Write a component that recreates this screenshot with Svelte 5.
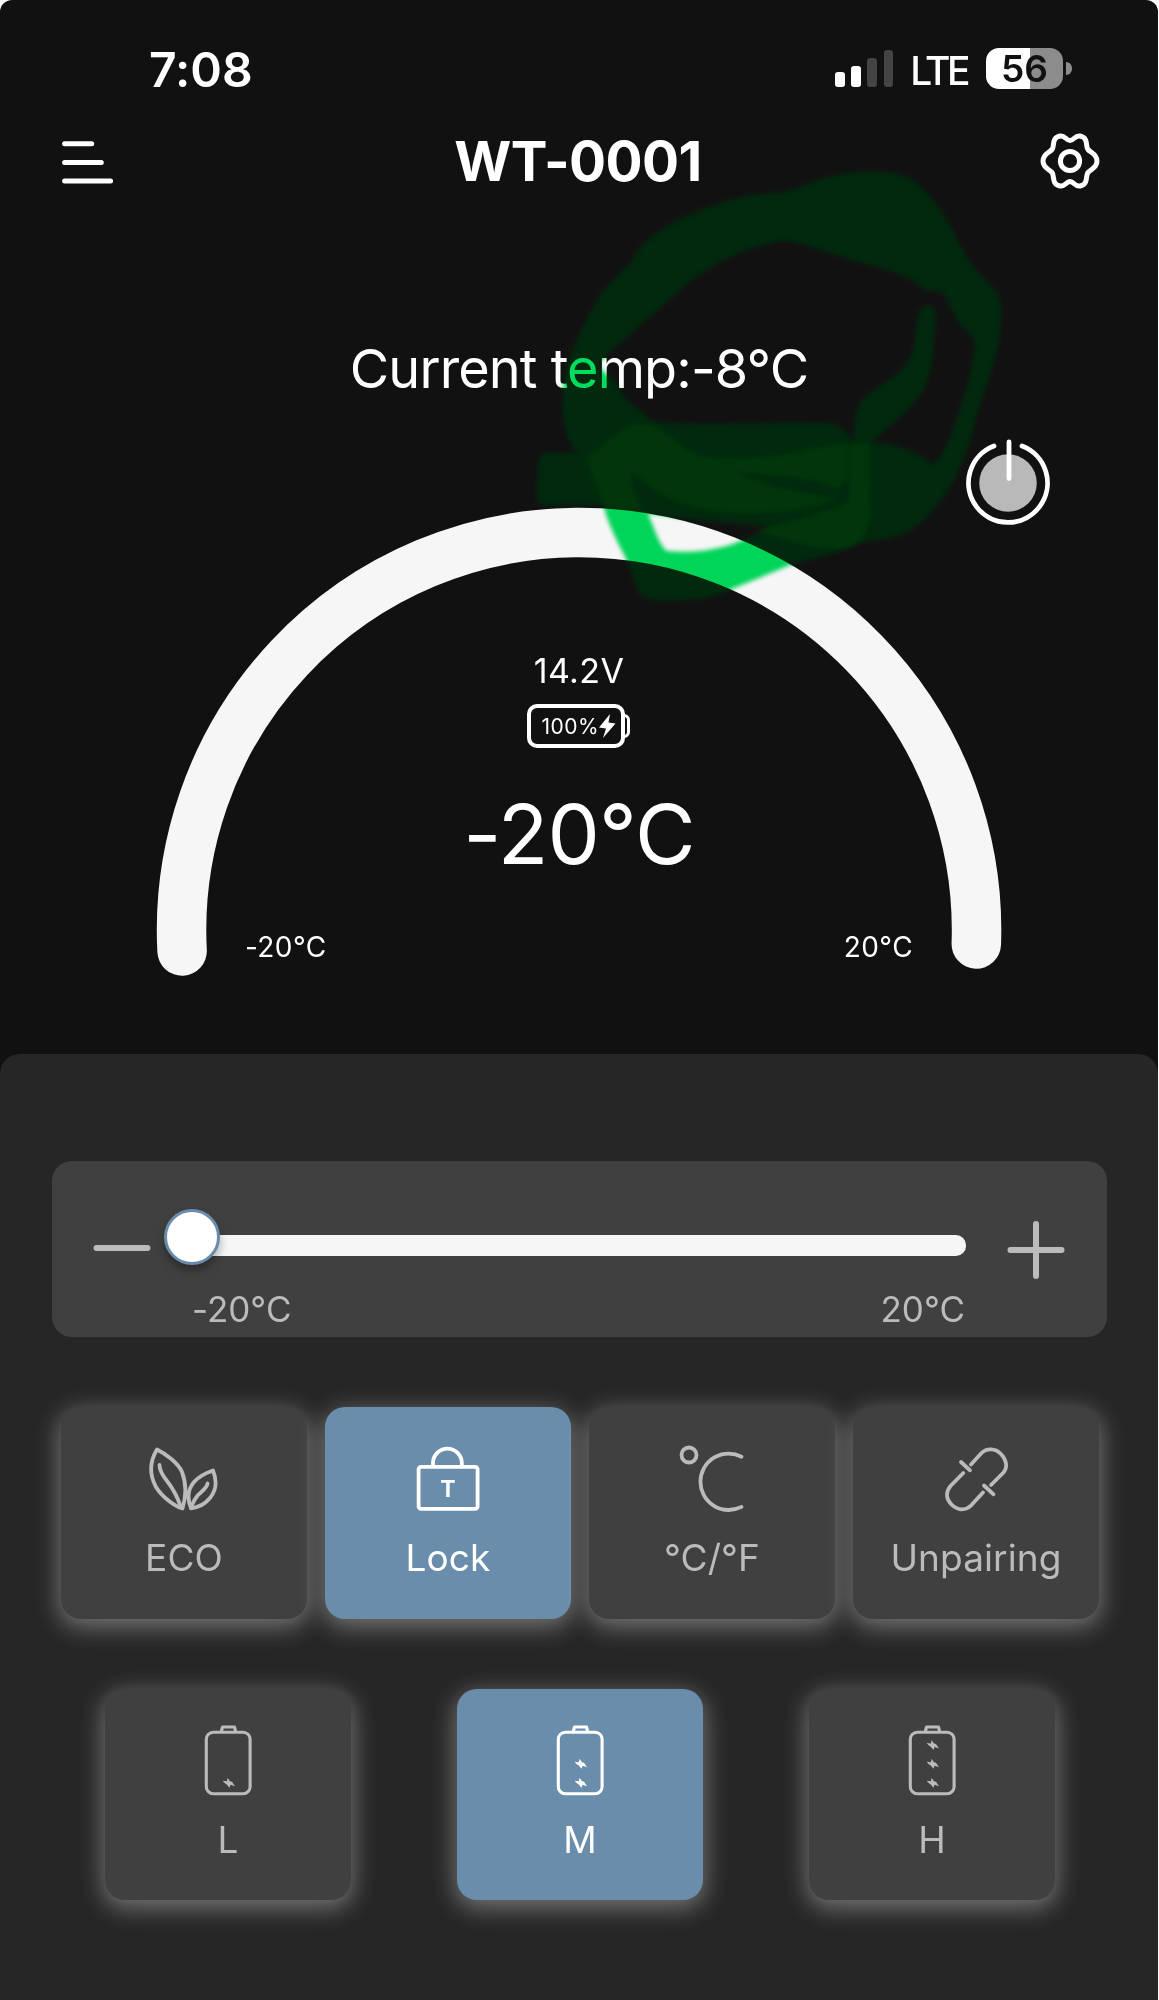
<script>
  let target = $state(-20);
  let locked = $state(true);
  let level = $state("M");

  const current = -8;
  const min = -20;
  const max = 20;
  const signal = [15, 21, 29, 37];

  const levels = [
    { name: "L", bolts: [57.7] },
    { name: "M", bolts: [38.7, 57.7] },
    { name: "H", bolts: [20, 38.7, 57.7] },
  ];

  // outline of the highlighter loop, drawn once per blend layer
  const loop =
    "M125 700C125 620 170 520 230 410C260 365 290 340 320 310C340 270 360 250 390 225C480 160 600 115 700 103C800 100 830 70 880 55C960 32 1050 30 1110 45C1180 75 1240 170 1280 260C1310 325 1350 355 1385 400C1405 440 1400 500 1380 590C1360 660 1335 730 1310 830C1285 920 1245 1000 1190 1060C1140 1125 1080 1135 1000 1145C920 1180 850 1195 790 1213L620 1285C560 1320 470 1325 400 1320C345 1320 335 1280 325 1235L305 1190C280 1140 255 1090 242 1035H65C45 1035 48 1000 52 960C55 900 50 880 80 878H165C130 840 122 770 125 700ZM228 610C330 510 400 450 480 375C560 310 650 265 740 245C800 235 850 265 900 280C990 310 1080 330 1130 355C1160 370 1170 400 1200 390C1230 385 1245 430 1270 480C1290 515 1325 520 1320 560C1315 630 1290 710 1270 770C1245 850 1220 905 1195 912C1150 870 1080 850 1018 848C1080 790 1150 740 1180 670C1205 610 1200 530 1207 460C1200 425 1165 430 1155 470C1145 520 1150 570 1125 610C1090 665 1020 680 985 735C970 770 970 810 968 850C950 810 920 790 890 790C700 785 530 800 385 785C340 740 290 710 285 680C265 650 240 640 228 610ZM370 1060C390 1100 400 1150 425 1172C480 1180 570 1175 640 1143L705 1112L720 1100C620 1090 500 1080 370 1060Z";

  let progress = $derived(((target - min) / (max - min)) * 100);

  /** @param {number} amount */
  function step(amount) {
    target = Math.min(max, Math.max(min, target + amount));
  }
</script>

<main class="phone">
  <div class="status-bar">
    <span class="time">7:08</span>
    <div class="status-icons">
      <div class="signal">
        {#each signal as height, i}
          <i class:off={i > 1} style:height="{height}px"></i>
        {/each}
      </div>
      <span class="network">LTE</span>
      <div class="phone-battery"><span>56</span></div>
    </div>
  </div>

  <header>
    <button class="plain" aria-label="Menu">
      <svg width="52" height="48" viewBox="0 -4 52 48">
        <path d="M2.6 2.8H29.7M2.6 21.4H39.3M2.6 40H48.6" />
      </svg>
    </button>
    <h1>WT-0001</h1>
    <button class="plain" aria-label="Settings">
      <svg width="60" height="56" viewBox="-30 -28 60 56">
        <path
          d="M-10 -25C-5 -26 -4 -20.5 0 -20.5S5 -26 10 -25C19 -23 15 -15 18 -11.5S27 -7 27 0S21 8 18 11.5S19 23 10 25C5 26 4 20.5 0 20.5S-5 26 -10 25C-19 23 -15 15 -18 11.5S-27 7 -27 0S-21 -8 -18 -11.5S-19 -23 -10 -25Z"
        />
        <circle r="9.6" />
      </svg>
    </button>
  </header>

  <p class="current">Current temp:{current}°C</p>

  <section class="gauge">
    <svg class="arc" width="1158" height="554" viewBox="0 500 1158 554">
      <path d="M182.1 951A397.5 397.5 0 1 1 976.3 944" />
    </svg>
    <div class="readout">
      <span class="voltage">14.2V</span>
      <div class="charge">
        <span>100%</span>
        <svg width="17" height="24" viewBox="0 0 17 24">
          <path d="M11 0L0 13.5L7 14.5L4 24L16.5 9.5L9.5 8.5Z" />
        </svg>
      </div>
      <strong>{target}°C</strong>
      <div class="range">
        <span>{min}°C</span>
        <span>{max}°C</span>
      </div>
    </div>
  </section>

  <button class="power plain" aria-label="Power">
    <svg width="86" height="90" viewBox="-43 -45 86 90">
      <circle r="28.8" />
      <path d="M-14 -37A39.5 39.5 0 1 0 14 -37M1 -41V-4.5" />
    </svg>
  </button>

  <!-- tint colours what is bright, glow lifts the dark background -->
  <svg class="marker tint" viewBox="0 0 1568 1380" preserveAspectRatio="none">
    <path fill-rule="evenodd" d={loop} />
  </svg>
  <svg class="marker glow" viewBox="0 0 1568 1380" preserveAspectRatio="none">
    <path fill-rule="evenodd" d={loop} />
    <path
      class="overlap"
      d="M190 890C230 870 270 820 310 800C350 785 390 790 430 825C500 885 600 935 700 965C780 990 850 1000 920 1015C860 1050 760 1060 650 1060C480 1055 400 1010 320 930C325 980 340 1010 355 1050L245 1040Q215 960 190 890Z"
    />
    <path
      class="overlap"
      d="M520 890C650 900 780 890 850 865Q910 850 955 850L950 950Q935 985 915 985C850 950 730 950 610 935Z"
    />
    <path
      class="overlap"
      d="M960 850H1015L1018 1060C1010 1130 980 1165 930 1168C850 1165 760 1140 690 1112C800 1080 880 1060 955 1025Z"
    />
  </svg>

  <section class="panel">
    <div class="slider-card">
      <button class="plain" aria-label="Decrease" onclick={() => step(-1)}>
        <svg width="58" height="60" viewBox="0 0 58 60">
          <path d="M3.5 28H54.5" />
        </svg>
      </button>
      <div class="slider">
        <div class="track">
          <div class="knob" style:left="{progress}%"></div>
        </div>
        <div class="limits">
          <span>{min}°C</span>
          <span>{max}°C</span>
        </div>
      </div>
      <button class="plain" aria-label="Increase" onclick={() => step(1)}>
        <svg width="58" height="60" viewBox="0 0 58 60">
          <path d="M3.5 30H54.5M29 4V56" />
        </svg>
      </button>
    </div>

    <div class="tiles">
      <button class="tile">
        <svg width="80" height="76" viewBox="0 0 80 76">
          <path
            d="M13 6.5C22 11 34 20 38 29C43 42 42 54 38.5 65.5C31 63.5 18 54 12 44C5 31 6 18 13 6.5ZM69 27.5C74 40 71 49 66 55C61 61 54 64.5 47 65.3C42.5 54 44 46 50 39C55 33 62 30 69 27.5Z"
          />
          <path
            d="M15.5 22C15.5 28 19 33 23 38S33 53 36.5 63M63.5 40.5C63 45 58 48 54 52Q50 57 48 62"
          />
        </svg>
        ECO
      </button>
      <button
        class="tile"
        class:active={locked}
        onclick={() => (locked = !locked)}
      >
        <svg width="80" height="76" viewBox="0 0 80 76">
          <rect x="10.6" y="23.8" width="59" height="42" rx="2.5" />
          <path d="M25 23V20A14.4 14.4 0 0 1 53.8 20V23" />
          <text x="40" y="53.5">T</text>
        </svg>
        Lock
      </button>
      <button class="tile">
        <svg width="80" height="76" viewBox="0 0 80 76">
          <circle cx="17" cy="12" r="7.5" />
          <path d="M69.5 13.7A28.2 28.2 0 1 0 69.5 63.9" />
        </svg>
        °C/°F
      </button>
      <button class="tile">
        <svg width="80" height="76" viewBox="0 0 80 76">
          <path
            d="M35 21.5L45.5 10C51 4.5 59.5 5.5 64.5 10.5C70.5 16.5 72 24 67.5 29.5L55 42M27.3 30L14.5 43C9 49.5 10.5 56.5 15.5 61.5C21.5 67.5 29.5 68 35 62.5L47 49.5M25 19L34 27.3M48 42.5L57.5 51.3"
          />
        </svg>
        Unpairing
      </button>
    </div>

    <div class="tiles levels">
      {#each levels as { name, bolts } (name)}
        <button
          class="tile"
          class:active={level === name}
          onclick={() => (level = name)}
        >
          <svg class="cell" width="80" height="76" viewBox="0 0 80 76">
            <rect x="18.3" y="7.2" width="43.8" height="61.5" rx="7" />
            <path d="M33.5 6L34.5 2H46.5L47.5 6" />
            {#each bolts as y}
              <path
                class="bolt"
                transform="translate(40.5 {y})"
                d="M-1 -5L1.5 -1.5L3.5 -1L6.5 3.5L2 2L1 5L-2 1.5L-3 1L-6 -2L-1.5 -1.5Z"
              />
            {/each}
          </svg>
          {name}
        </button>
      {/each}
    </div>
  </section>
</main>

<style>
  :global(body) {
    background: #fff;
  }

  .phone {
    position: relative;
    width: 1158px;
    height: 2000px;
    overflow: hidden;
    border-radius: 12px 12px 0 0;
    background: #111;
    color: #fff;
    font-family: Inter, "Liberation Sans", sans-serif;
    font-feature-settings: "calt" 0;
    isolation: isolate;
  }

  button {
    font: inherit;
    font-feature-settings: inherit;
    color: inherit;
    border: 0;
    padding: 0;
  }

  .plain {
    background: none;
    line-height: 0;
  }

  svg {
    fill: none;
    stroke: currentColor;
    stroke-linecap: round;
    stroke-linejoin: round;
  }

  .status-bar {
    box-sizing: border-box;
    height: 108px;
    padding: 32px 95px 0 149px;
    display: flex;
    align-items: center;
    justify-content: space-between;
  }

  .time {
    margin-bottom: 1px;
    font-size: 48px;
    font-weight: 600;
  }

  .status-icons {
    display: flex;
    align-items: center;
  }

  .signal {
    display: flex;
    align-items: flex-end;
    gap: 6.6px;
    height: 37px;
    margin: 0 17px 3px 0;
  }

  .signal i {
    width: 9.6px;
    border-radius: 3px;
    background: #fff;
  }

  .signal .off {
    background: #444;
  }

  .network {
    margin-right: 19px;
    font-size: 39px;
    font-weight: 500;
    letter-spacing: -3.5px;
  }

  .phone-battery {
    position: relative;
    width: 77px;
    height: 41px;
    margin-bottom: 4px;
    border-radius: 13px;
    background: linear-gradient(90deg, #fff 57%, #8c8c8c 57%);
    color: #111;
    font-size: 37px;
    font-weight: 600;
    line-height: 42px;
    text-align: center;
  }

  .phone-battery::after {
    content: "";
    position: absolute;
    left: 79.5px;
    top: 14.5px;
    width: 6px;
    height: 13px;
    border-radius: 0 6px 6px 0;
    background: #8c8c8c;
  }

  header {
    box-sizing: border-box;
    height: 106px;
    padding: 0 58px 0 62px;
    display: flex;
    align-items: center;
    justify-content: space-between;
    stroke-width: 5;
  }

  h1 {
    margin: 0;
    padding-left: 2px;
    font-size: 55px;
    font-weight: 700;
    letter-spacing: -0.6px;
  }

  .current {
    box-sizing: border-box;
    height: 286px;
    margin: 0;
    padding-top: 24px;
    font-size: 54px;
    font-weight: 400;
    letter-spacing: -0.9px;
    line-height: 262px;
    text-align: center;
  }

  .gauge {
    display: grid;
    height: 554px;
  }

  .gauge > * {
    grid-area: 1 / 1;
  }

  .arc {
    stroke: #f6f6f6;
    stroke-width: 49.5;
  }

  .readout {
    display: flex;
    flex-direction: column;
    align-items: center;
    padding-top: 151px;
  }

  .voltage {
    font-size: 34px;
    letter-spacing: 0.4px;
    line-height: 40px;
  }

  .charge {
    box-sizing: border-box;
    position: relative;
    display: flex;
    align-items: center;
    width: 98px;
    height: 44px;
    margin: 13px 7px 0 0;
    padding-left: 11px;
    border: 4px solid #fff;
    border-radius: 10px;
    font-size: 21px;
    letter-spacing: 0.5px;
  }

  .charge::after {
    content: "";
    position: absolute;
    left: 91px;
    top: 6px;
    width: 3px;
    height: 18px;
    border: 3.5px solid #fff;
    border-left-width: 2px;
    border-radius: 0 6px 6px 0;
  }

  .charge svg {
    fill: #fff;
    stroke: none;
  }

  strong {
    margin-top: 36px;
    font-size: 83px;
    font-weight: 400;
    letter-spacing: -0.9px;
    line-height: 100px;
  }

  .range {
    align-self: stretch;
    display: flex;
    justify-content: space-between;
    margin-top: 46px;
    padding: 0 245px;
    font-size: 28px;
    letter-spacing: 0.4px;
    line-height: 34px;
  }

  .power {
    position: absolute;
    left: 965px;
    top: 438px;
  }

  .power svg {
    stroke-width: 4.8;
  }

  .power circle {
    fill: #b9b9b9;
    stroke: none;
  }

  .marker {
    position: absolute;
    left: 520px;
    top: 160px;
    width: 540px;
    height: 460px;
    stroke: none;
    pointer-events: none;
    filter: blur(2px);
  }

  .tint {
    fill: rgb(0, 216, 88);
    mix-blend-mode: multiply;
  }

  .glow {
    fill: rgb(0, 28, 7);
    mix-blend-mode: screen;
  }

  .overlap {
    fill: rgb(0, 44, 4);
    fill-opacity: 0.85;
  }

  .panel {
    box-sizing: border-box;
    height: 946px;
    padding: 107px 51px 0 52px;
    border-radius: 20px 20px 0 0;
    background: #262626;
    color: #bbb;
  }

  .slider-card {
    box-sizing: border-box;
    display: flex;
    height: 176px;
    padding: 59px 42px 0 41px;
    border-radius: 20px;
    background: #404040;
    stroke-width: 6;
  }

  .slider-card .plain {
    align-self: flex-start;
  }

  .slider {
    flex: 1;
    padding: 15px 41px 0 41px;
  }

  .track {
    position: relative;
    height: 21px;
    border-radius: 10px;
    background: #f6f6f6;
  }

  .knob {
    box-sizing: border-box;
    position: absolute;
    top: -26px;
    width: 56px;
    height: 56px;
    margin-left: -28px;
    border: 3px solid #6a8cab;
    border-radius: 50%;
    background: #fff;
    box-shadow: 0 6px 10px rgba(0, 0, 0, 0.3);
  }

  .limits {
    display: flex;
    justify-content: space-between;
    margin-top: 32px;
    padding-right: 1px;
    font-size: 35px;
    line-height: 42px;
  }

  .tiles {
    display: flex;
    justify-content: space-between;
    padding: 0 8px 0 9px;
    margin-top: 70px;
  }

  .levels {
    padding: 0 52px 0 53px;
  }

  .tile {
    box-sizing: border-box;
    width: 246px;
    height: 211.5px;
    padding-top: 36px;
    display: flex;
    flex-direction: column;
    align-items: center;
    border-radius: 20px;
    background: #404040;
    box-shadow: 0 6px 24px 2px rgba(255, 255, 255, 0.36);
    font-size: 37px;
    letter-spacing: 0.1px;
    line-height: 50px;
  }

  .tile svg {
    margin-bottom: 14px;
    stroke-width: 3.8;
  }

  .tile text {
    fill: currentColor;
    stroke: none;
    font-size: 23px;
    font-weight: 700;
    text-anchor: middle;
  }

  .tile .cell {
    stroke-width: 3.1;
  }

  .cell .bolt {
    fill: currentColor;
    stroke: none;
  }

  .active {
    background: #698dab;
    color: #fff;
  }
</style>
